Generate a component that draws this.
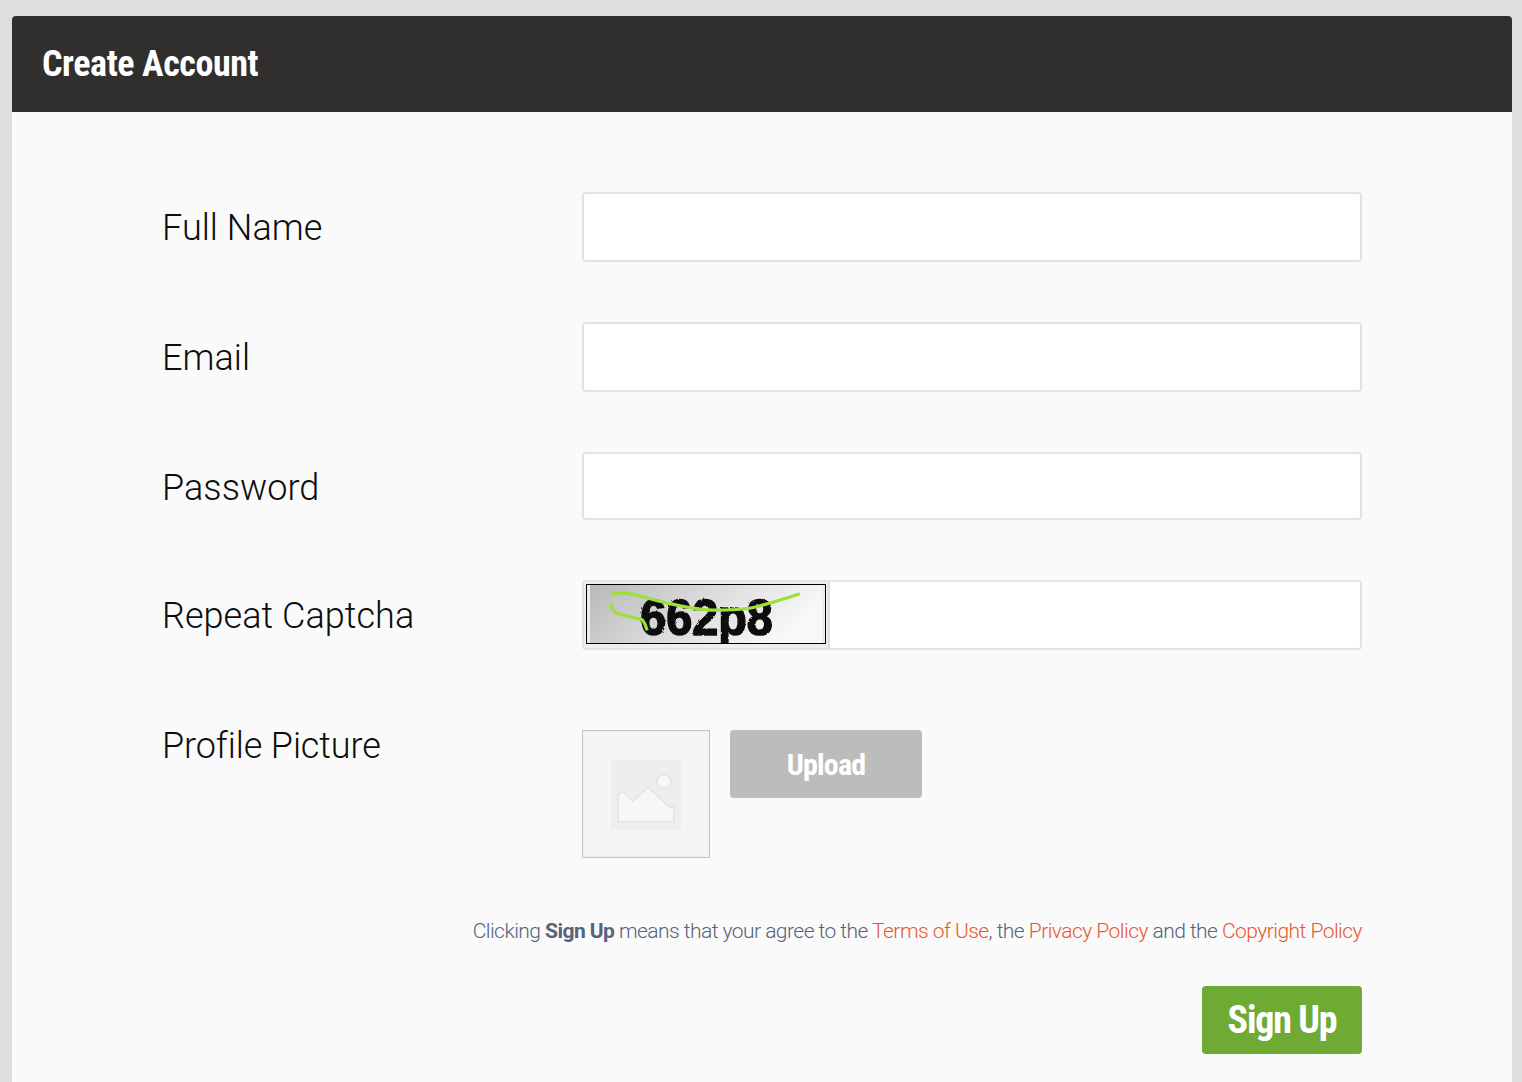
<script lang="ts">
  const terms = ["Terms of Use", "Privacy Policy", "Copyright Policy"];
</script>

<div class="card">
  <header class="head"><h1>Create Account</h1></header>
  <form class="form" onsubmit={(e) => e.preventDefault()}>
    <div class="row">
      <label class="label" for="name">Full Name</label>
      <input class="field" id="name" type="text" />
    </div>
    <div class="row">
      <label class="label" for="email">Email</label>
      <input class="field" id="email" type="email" />
    </div>
    <div class="row password-row">
      <label class="label" for="password">Password</label>
      <input class="field short" id="password" type="password" />
    </div>
    <div class="row">
      <label class="label" for="captcha">Repeat Captcha</label>
      <div class="captcha-field">
        <div class="captcha-frame">
          <svg class="captcha" viewBox="0 0 240 60" width="240" height="60" aria-label="captcha">
            <defs>
              <linearGradient id="cg" x1="0" x2="1" y1="0" y2="0.3">
                <stop offset="0" stop-color="#b8b8b8" />
                <stop offset="0.5" stop-color="#dadada" />
                <stop offset="1" stop-color="#f8f8f8" />
              </linearGradient>
              <filter id="rough" x="-5%" y="-5%" width="110%" height="110%">
                <feTurbulence type="fractalNoise" baseFrequency="0.35" numOctaves="2" seed="4" />
                <feDisplacementMap in="SourceGraphic" scale="2.5" />
              </filter>
            </defs>
            <rect width="240" height="60" fill="url(#cg)" />
            <g filter="url(#rough)">
              <text x="52" y="52" class="captcha-text" textLength="137" lengthAdjust="spacingAndGlyphs">662p8</text>
            </g>
            <path d="M22 9C30 8 36 8 40 9C52 11 64 15 77 18C95 22 110 26 127 26C142 26 156 26 170 23C186 19 202 14 217 9" fill="none" stroke="#9ee03a" stroke-width="3.4" />
            <path d="M22 19C22 24 23 27 27 29C34 32 46 33 54 36C57 39 58 43 59 47" fill="none" stroke="#9ee03a" stroke-width="3.4" />
          </svg>
        </div>
        <input class="captcha-input" id="captcha" type="text" />
      </div>
    </div>
    <div class="row picture-row">
      <span class="label">Profile Picture</span>
      <div class="picture">
        <div class="thumb">
          <svg viewBox="0 0 70 70" width="70" height="71" aria-hidden="true">
            <rect width="70" height="70" rx="1" fill="#eeeeee" />
            <path d="M7 35L12 32L22 42L37 28L59 48L63 46V62H7Z" fill="#f7f7f7" stroke="#e4e4e4" stroke-width="1.5" />
            <circle cx="53" cy="22" r="7" fill="#f7f7f7" stroke="#e2e2e2" stroke-width="1.5" />
          </svg>
        </div>
        <button class="upload" type="button">Upload</button>
      </div>
    </div>
    <p class="note">
      Clicking <b>Sign Up</b> means that your agree to the <a href="#terms">{terms[0]}</a>, the <a href="#privacy">{terms[1]}</a> and the <a href="#copyright">{terms[2]}</a>
    </p>
    <div class="actions">
      <button class="signup" type="submit">Sign Up</button>
    </div>
  </form>
</div>

<style>
  :global(body) {
    background: #dfdedc;
    margin: 0;
  }
  .card {
    margin: 16px 10px 0 12px;
    border-radius: 4px 4px 0 0;
    overflow: hidden;
    background: #fafafa;
    font-family: Roboto, "Liberation Sans", sans-serif;
  }
  .head {
    background: #302f2d;
    height: 96px;
    display: flex;
    align-items: center;
    padding-left: 30px;
  }
  h1 {
    margin: 0;
    color: #fff;
    font-family: "Roboto Condensed", "Liberation Sans Narrow", Roboto, sans-serif;
    font-size: 36px;
    font-weight: 700;
    line-height: 1;
    letter-spacing: -0.4px;
  }
  .form {
    padding: 80px 150px 28px 150px;
  }
  .row {
    display: grid;
    grid-template-columns: 420px 780px;
    align-items: center;
    margin-bottom: 60px;
  }
  .label {
    font-size: 36px;
    font-weight: 300;
    color: #0d0d0d;
    padding-top: 2px;
    letter-spacing: 0.05px;
  }
  .password-row .label {
    padding-top: 4px;
  }
  .field {
    box-sizing: border-box;
    height: 70px;
    width: 100%;
    background: #fff;
    border: 2px solid #dfe3ec;
    border-radius: 4px;
    margin: 0;
    padding: 0 16px;
  }
  .field.short {
    height: 68px;
  }
  .captcha-field {
    box-sizing: border-box;
    height: 70px;
    display: flex;
    background: #fff;
    border: 2px solid #dfe3ec;
    border-radius: 4px;
    overflow: hidden;
  }
  .captcha-frame {
    background: #eeedeb;
    padding: 2px;
    margin: -2px 0 -2px -2px;
    border: 2px solid #dedddb;
    border-radius: 4px 0 0 4px;
    flex: none;
    display: flex;
    align-items: flex-start;
  }
  .captcha {
    display: block;
    box-sizing: border-box;
    border: 1.5px solid #000;
  }
  .captcha-text {
    font-family: "Liberation Sans", sans-serif;
    font-weight: 700;
    font-size: 52px;
    fill: #0c0c0c;
    stroke: #0c0c0c;
    stroke-width: 1.6px;
  }
  .captcha-input {
    flex: 1;
    min-width: 0;
    border: 0;
    background: #fff;
    margin: 0;
    padding: 0;
  }
  .picture-row {
    align-items: start;
    margin-top: 80px;
  }
  .picture-row .label {
    margin-top: -7px;
    letter-spacing: -0.1px;
  }
  .picture {
    display: flex;
    gap: 20px;
    align-items: flex-start;
  }
  .thumb {
    box-sizing: border-box;
    width: 128px;
    height: 128px;
    background: #f5f5f5;
    border: 1px solid #c4c4c4;
    outline: 1px solid #f0f0f0;
    outline-offset: -2px;
    display: flex;
    align-items: center;
    justify-content: center;
  }
  .upload {
    width: 192px;
    height: 68px;
    border: 0;
    border-radius: 4px;
    background: #bcbcbc;
    color: #fff;
    font-family: "Roboto Condensed", "Liberation Sans Narrow", Roboto, sans-serif;
    font-size: 30px;
    font-weight: 700;
    letter-spacing: -0.8px;
    padding: 0;
  }
  .note {
    margin: 0;
    text-align: right;
    font-size: 21px;
    font-weight: 300;
    line-height: 26px;
    color: #566378;
    letter-spacing: -0.54px;
    white-space: nowrap;
  }
  .note b {
    font-weight: 700;
  }
  .note a {
    color: #e5592e;
    text-decoration: none;
  }
  .actions {
    display: flex;
    justify-content: flex-end;
    margin-top: 42px;
  }
  .signup {
    width: 160px;
    height: 68px;
    border: 0;
    border-radius: 4px;
    background: #6dab35;
    color: #fff;
    font-family: "Roboto Condensed", "Liberation Sans Narrow", Roboto, sans-serif;
    font-size: 38px;
    font-weight: 700;
    letter-spacing: -1.2px;
    padding: 0;
  }
</style>
